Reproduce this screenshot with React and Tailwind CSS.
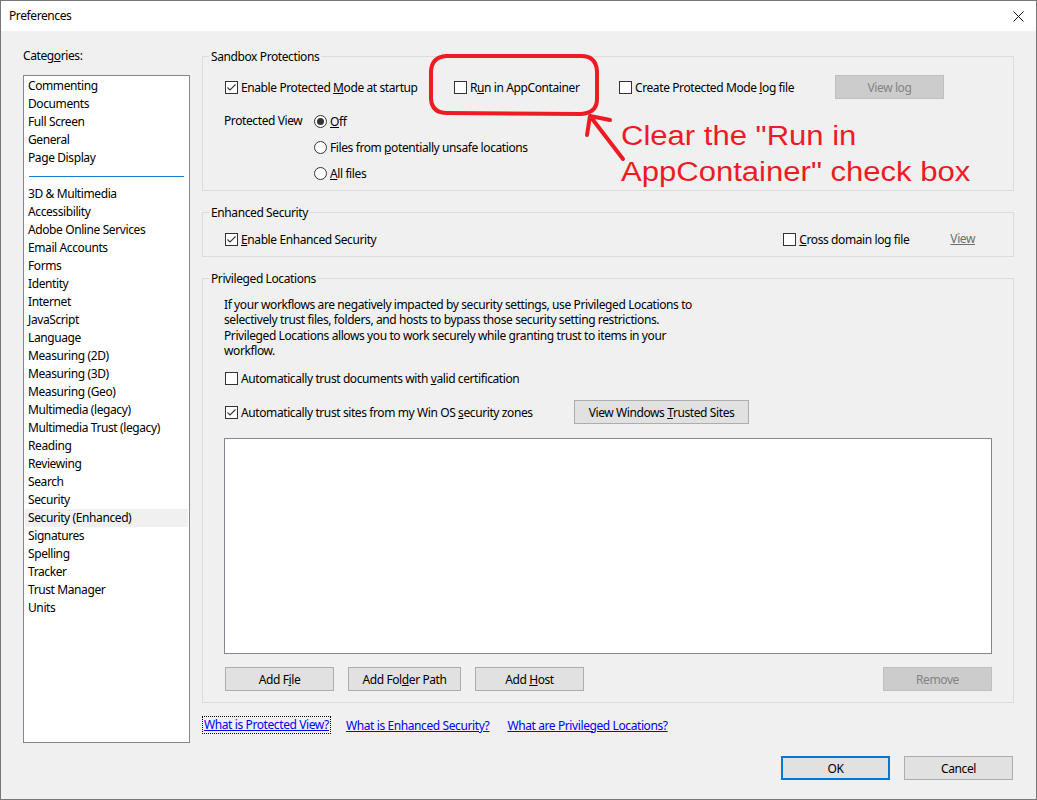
import React from "react";

const Check = ({ checked }) => (
  <span className="w-[13px] h-[13px] border border-[#333333] bg-white flex items-center justify-center shrink-0">
    {checked && (
      <svg width="11" height="11" viewBox="0 0 11 11">
        <path d="M1.5 5.5 L4 8 L9.5 2.5" fill="none" stroke="#333333" strokeWidth="1.1" />
      </svg>
    )}
  </span>
);

const Radio = ({ checked }) => (
  <span className="w-[13px] h-[13px] rounded-full border border-[#333333] bg-white flex items-center justify-center shrink-0">
    {checked && <span className="w-[7px] h-[7px] rounded-full bg-[#333333]" />}
  </span>
);

const CheckRow = ({ checked, children, className = "" }) => (
  <div className={"flex items-center h-[18px] gap-[3px] " + className}>
    <Check checked={checked} />
    <span className="whitespace-nowrap">{children}</span>
  </div>
);

const RadioRow = ({ checked, children }) => (
  <div className="flex items-center h-[18px] gap-[3px]">
    <Radio checked={checked} />
    <span className="whitespace-nowrap">{children}</span>
  </div>
);

const Btn = ({ children, disabled, className = "" }) => (
  <div
    className={
      "h-[24px] flex items-center justify-center border whitespace-nowrap " +
      (disabled
        ? "bg-[#cccccc] border-[#bfbfbf] text-[#838383] "
        : "bg-[#e1e1e1] border-[#adadad] text-black ") +
      className
    }
  >
    <span>{children}</span>
  </div>
);

const Group = ({ title, children, className = "" }) => (
  <fieldset className={"border border-[#dcdcdc] m-0 p-0 min-w-0 " + className}>
    <legend className="ml-[6px] px-[2px] leading-[15px] h-[15px]">{title}</legend>
    {children}
  </fieldset>
);

const categories = [
  "Commenting",
  "Documents",
  "Full Screen",
  "General",
  "Page Display",
  "---",
  "3D & Multimedia",
  "Accessibility",
  "Adobe Online Services",
  "Email Accounts",
  "Forms",
  "Identity",
  "Internet",
  "JavaScript",
  "Language",
  "Measuring (2D)",
  "Measuring (3D)",
  "Measuring (Geo)",
  "Multimedia (legacy)",
  "Multimedia Trust (legacy)",
  "Reading",
  "Reviewing",
  "Search",
  "Security",
  "Security (Enhanced)",
  "Signatures",
  "Spelling",
  "Tracker",
  "Trust Manager",
  "Units",
];

export default function App() {
  return (
    <div className="relative w-[1037px] h-[800px] bg-[#f0f0f0] border border-[#777777] font-['Noto_Sans',sans-serif] text-[12px] tracking-[-0.4px] text-black leading-[15px] overflow-hidden">
      {/* Title bar */}
      <div className="h-[30px] bg-white flex items-center justify-between pl-[8px] pr-[10px]">
        <span className="mt-[-1px]">Preferences</span>
        <svg width="11" height="11" viewBox="0 0 11 11" className="mr-[2px]">
          <path d="M0.5 0.5 L10.5 10.5 M10.5 0.5 L0.5 10.5" stroke="#111" strokeWidth="1" />
        </svg>
      </div>

      <div className="flex">
        {/* Left column */}
        <div className="pl-[22px] flex flex-col">
          <div className="mt-[16px] h-[18px] leading-[18px]">
            Categ<u>o</u>ries:
          </div>
          <div className="mt-[10px] w-[167px] h-[668px] bg-white border border-[#828790] pt-[1px]">
            {categories.map((c, i) =>
              c === "---" ? (
                <div key={i} className="h-[18px] flex items-center px-[5px]">
                  <div className="h-[1px] w-full bg-[#1a7fd4]" />
                </div>
              ) : (
                <div
                  key={i}
                  className={
                    "h-[18px] leading-[18px] mx-[1px] pl-[3px] whitespace-nowrap " +
                    (c === "Security (Enhanced)" ? "bg-[#f0f0f0]" : "")
                  }
                >
                  {c}
                </div>
              )
            )}
          </div>
        </div>

        {/* Right column */}
        <div className="ml-[12px] w-[812px] flex flex-col">
          <Group title="Sandbox Protections" className="mt-[18px]">
            <div className="pl-[22px] pb-[8px]">
              <div className="mt-[11px] h-[24px] flex items-center">
                <CheckRow checked className="w-[229px]">
                  Enable Protected <u>M</u>ode at startup
                </CheckRow>
                <CheckRow className="w-[165px]">
                  R<u>u</u>n in AppContainer
                </CheckRow>
                <CheckRow className="w-[216px]">
                  Create Protected Mode <u>l</u>og file
                </CheckRow>
                <Btn disabled className="w-[109px]">
                  View log
                </Btn>
              </div>
              <div className="mt-[13px] flex">
                <div className="w-[90px] -ml-[1px] h-[18px] leading-[18px]">Protected View</div>
                <div className="flex flex-col gap-[8px]">
                  <RadioRow checked>
                    <u>O</u>ff
                  </RadioRow>
                  <RadioRow>
                    Files from <u>p</u>otentially unsafe locations
                  </RadioRow>
                  <RadioRow>
                    <u>A</u>ll files
                  </RadioRow>
                </div>
              </div>
            </div>
          </Group>

          <Group title="Enhanced Security" className="mt-[14px]">
            <div className="pl-[22px] pr-[38px] pb-[8px] mt-[10px] flex items-center">
              <CheckRow checked className="flex-1">
                <u>E</u>nable Enhanced Security
              </CheckRow>
              <CheckRow className="w-[167px]">
                <u>C</u>ross domain log file
              </CheckRow>
              <span className="text-[#6d6d6d] underline h-[18px] leading-[18px]">View</span>
            </div>
          </Group>

          <Group title="Privileged Locations" className="mt-[14px]">
            <div className="pl-[21px] pr-[21px] pb-[11px]">
              <p className="mt-[11px] leading-[15.3px]">
                If your workflows are negatively impacted by security settings, use Privileged Locations to
                <br />
                selectively trust files, folders, and hosts to bypass those security setting restrictions.
                <br />
                Privileged Locations allows you to work securely while granting trust to items in your
                <br />
                workflow.
              </p>
              <CheckRow className="mt-[11px] pl-[1px]">
                Automatically trust documents with <u>v</u>alid certification
              </CheckRow>
              <div className="mt-[13px] h-[24px] flex items-center pl-[1px]">
                <CheckRow checked className="w-[349px]">
                  Automatically trust sites from my Win OS <u>s</u>ecurity zones
                </CheckRow>
                <Btn className="w-[175px]">
                  View Windows <u>T</u>rusted Sites
                </Btn>
              </div>
              <div className="mt-[14px] h-[216px] bg-white border border-[#828790]" />
              <div className="mt-[13px] flex items-center pl-[1px]">
                <Btn className="w-[109px]">
                  Add F<u>i</u>le
                </Btn>
                <Btn className="w-[113px] ml-[14px]">
                  Add Fol<u>d</u>er Path
                </Btn>
                <Btn className="w-[109px] ml-[14px]">
                  Add <u>H</u>ost
                </Btn>
                <div className="flex-1" />
                <Btn disabled className="w-[109px]">
                  Remove
                </Btn>
              </div>
            </div>
          </Group>

          <div className="mt-[13px] h-[18px] flex items-center text-[#0000ff]">
            <span className="underline border border-dotted border-black px-[1px] h-[18px] leading-[16px]">
              What is Protected View?
            </span>
            <span className="underline ml-[15px]">What is Enhanced Security?</span>
            <span className="underline ml-[18px]">What are Privileged Locations?</span>
          </div>

          <div className="mt-[22px] flex justify-end pr-[1px]">
            <Btn className="w-[109px] border-2 !border-[#0078d7]">OK</Btn>
            <Btn className="w-[109px] ml-[14px]">Cancel</Btn>
          </div>
        </div>
      </div>

      {/* Red annotation overlay */}
      <svg
        className="absolute left-0 top-0 pointer-events-none"
        width="1037"
        height="800"
        viewBox="0 0 1037 800"
      >
        <path
          d="M445 55 Q431 56 430 70 L430 98 Q431 112 446 112 L580 113 Q596 112 596 98 L596 70 Q595 55 580 55 Z"
          fill="none"
          stroke="#ed1c24"
          strokeWidth="4"
          strokeLinejoin="round"
        />
        <path
          d="M622 158 L589 115 M589 115 L586 134 M589 115 L609 119"
          fill="none"
          stroke="#ed1c24"
          strokeWidth="4"
          strokeLinecap="round"
        />
      </svg>
      <div className="absolute left-[620px] top-[117px] pointer-events-none font-['Liberation_Sans',Arial,sans-serif] text-[27px] leading-[36px] tracking-normal text-[#ed1c24] origin-left scale-x-[1.15] whitespace-nowrap">
        Clear the "Run in
        <br />
        AppContainer" check box
      </div>
    </div>
  );
}
